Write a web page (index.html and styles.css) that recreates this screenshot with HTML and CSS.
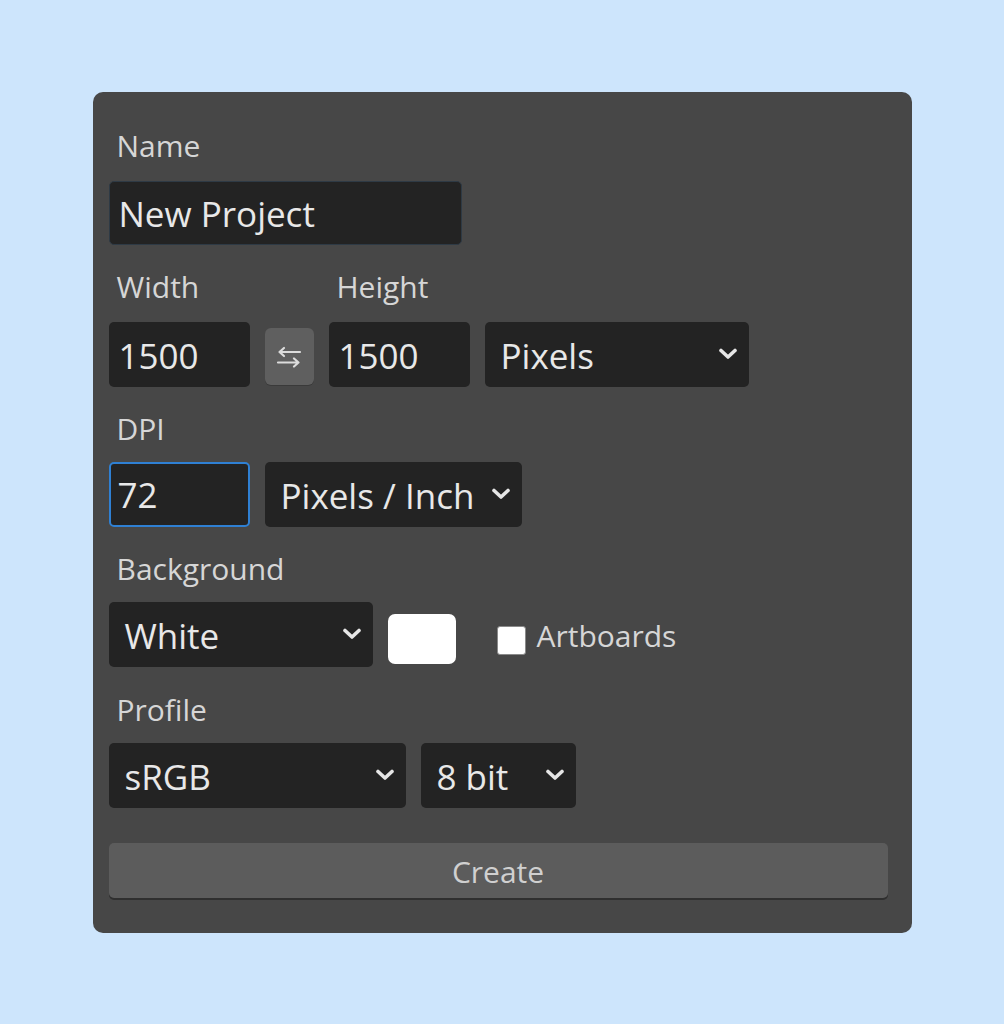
FILE: index.html
```html
<!DOCTYPE html>
<html lang="en">
<head>
<meta charset="utf-8">
<title>New Project</title>
<link rel="stylesheet" href="styles.css">
</head>
<body>
<div class="panel">
  <div class="label first">Name</div>
  <div class="row name-row">
    <div class="field name-field">New Project</div>
  </div>

  <div class="label-row">
    <div class="label w-label">Width</div>
    <div class="label">Height</div>
  </div>
  <div class="row">
    <div class="field num">1500</div>
    <div class="swap">
      <svg width="28" height="22" viewBox="0 0 28 22" aria-hidden="true">
        <path d="M4.5 6 H25 M9 2 L4.5 6 L9 10" fill="none" stroke="#dcdcdc" stroke-width="2.2" stroke-linecap="round" stroke-linejoin="round"/>
        <path d="M3 16.5 H23.5 M19 12.5 L23.5 16.5 L19 20.5" fill="none" stroke="#dcdcdc" stroke-width="2.2" stroke-linecap="round" stroke-linejoin="round"/>
      </svg>
    </div>
    <div class="field num">1500</div>
    <div class="select units">Pixels
      <svg class="chev" width="20" height="12" viewBox="0 0 20 12" aria-hidden="true"><polyline points="3,2.5 10,9 17,2.5" fill="none" stroke="#e6e6e6" stroke-width="3.6" stroke-linecap="round" stroke-linejoin="round"/></svg>
    </div>
  </div>

  <div class="label">DPI</div>
  <div class="row">
    <div class="field num active">72</div>
    <div class="select dpi-unit">Pixels / Inch
      <svg class="chev" width="20" height="12" viewBox="0 0 20 12" aria-hidden="true"><polyline points="3,2.5 10,9 17,2.5" fill="none" stroke="#e6e6e6" stroke-width="3.6" stroke-linecap="round" stroke-linejoin="round"/></svg>
    </div>
  </div>

  <div class="label">Background</div>
  <div class="row">
    <div class="select bg-select">White
      <svg class="chev" width="20" height="12" viewBox="0 0 20 12" aria-hidden="true"><polyline points="3,2.5 10,9 17,2.5" fill="none" stroke="#e6e6e6" stroke-width="3.6" stroke-linecap="round" stroke-linejoin="round"/></svg>
    </div>
    <div class="swatch"></div>
    <div class="check"></div>
    <div class="check-label">Artboards</div>
  </div>

  <div class="label profile-label">Profile</div>
  <div class="row">
    <div class="select profile">sRGB
      <svg class="chev" width="20" height="12" viewBox="0 0 20 12" aria-hidden="true"><polyline points="3,2.5 10,9 17,2.5" fill="none" stroke="#e6e6e6" stroke-width="3.6" stroke-linecap="round" stroke-linejoin="round"/></svg>
    </div>
    <div class="select bits">8 bit
      <svg class="chev" width="20" height="12" viewBox="0 0 20 12" aria-hidden="true"><polyline points="3,2.5 10,9 17,2.5" fill="none" stroke="#e6e6e6" stroke-width="3.6" stroke-linecap="round" stroke-linejoin="round"/></svg>
    </div>
  </div>

  <div class="create">Create</div>
</div>
</body>
</html>
```

FILE: styles.css
```css
* {
  box-sizing: border-box;
}

html, body {
  margin: 0;
  padding: 0;
}

body {
  width: 1004px;
  height: 1024px;
  background: #cde5fc;
  display: flex;
  align-items: center;
  justify-content: center;
  font-family: "Open Sans", "DejaVu Sans", sans-serif;
}

.panel {
  width: 819px;
  height: 841px;
  background: #474747;
  border-radius: 10px;
  padding: 34px 24px 33px 16px;
  display: flex;
  flex-direction: column;
}

.label {
  font-size: 30px;
  line-height: 40px;
  color: #d6d6d6;
  padding-left: 8px;
  margin-top: 22px;
  margin-bottom: 13px;
}

.label.first {
  margin-top: 0;
  margin-bottom: 15px;
}

.label.profile-label {
  margin-top: 23px;
}

.label-row {
  display: flex;
}

.label-row .label {
  margin-top: 22px;
  margin-bottom: 15px;
}

.w-label {
  width: 220px;
}

.row {
  display: flex;
  align-items: flex-start;
  height: 65px;
  flex: none;
}

.name-row {
  height: 64px;
}

.field,
.select {
  height: 65px;
  background: #232323;
  border-radius: 5px;
  color: #e8e8e8;
  font-size: 35px;
  display: flex;
  align-items: center;
  white-space: nowrap;
  padding-top: 3px;
}

.field {
  padding-left: 10px;
}

.name-field {
  width: 353px;
  height: 64px;
  border: 1px solid #2e3a45;
  padding-left: 9px;
  padding-top: 1px;
}

.num {
  width: 141px;
}

.num.active {
  border: 2px solid #2f80d3;
  padding-left: 7px;
  padding-top: 1px;
}

.swap {
  width: 49px;
  height: 57px;
  margin: 6px 15px 0;
  background: #5f5f5f;
  border-radius: 6px;
  box-shadow: 0 1px 0 #3a3a3a;
  display: flex;
  align-items: center;
  justify-content: center;
  padding-top: 2px;
}

.select {
  padding-left: 16px;
  padding-right: 11px;
}

.chev {
  margin-left: auto;
  margin-bottom: 3px;
  flex: none;
}

.units {
  width: 264px;
  margin-left: 15px;
}

.dpi-unit {
  width: 257px;
  margin-left: 15px;
}

.bg-select {
  width: 264px;
}

.swatch {
  width: 68px;
  height: 50px;
  margin: 12px 0 0 15px;
  background: #ffffff;
  border-radius: 7px;
}

.check {
  width: 29px;
  height: 29px;
  margin: 24px 0 0 41px;
  background: #ffffff;
  border: 1px solid #8a8a8a;
  border-radius: 3px;
}

.check-label {
  margin-left: 11px;
  font-size: 30px;
  line-height: 68px;
  color: #d6d6d6;
}

.profile {
  width: 297px;
}

.bits {
  width: 155px;
  margin-left: 15px;
}

.create {
  margin-top: 35px;
  height: 55px;
  width: 779px;
  flex: none;
  background: #5c5c5c;
  border-radius: 5px;
  box-shadow: 0 2px 0 #2f2f2f;
  color: #d0d0d0;
  font-size: 30px;
  display: flex;
  align-items: center;
  justify-content: center;
  padding-top: 3px;
}
```
